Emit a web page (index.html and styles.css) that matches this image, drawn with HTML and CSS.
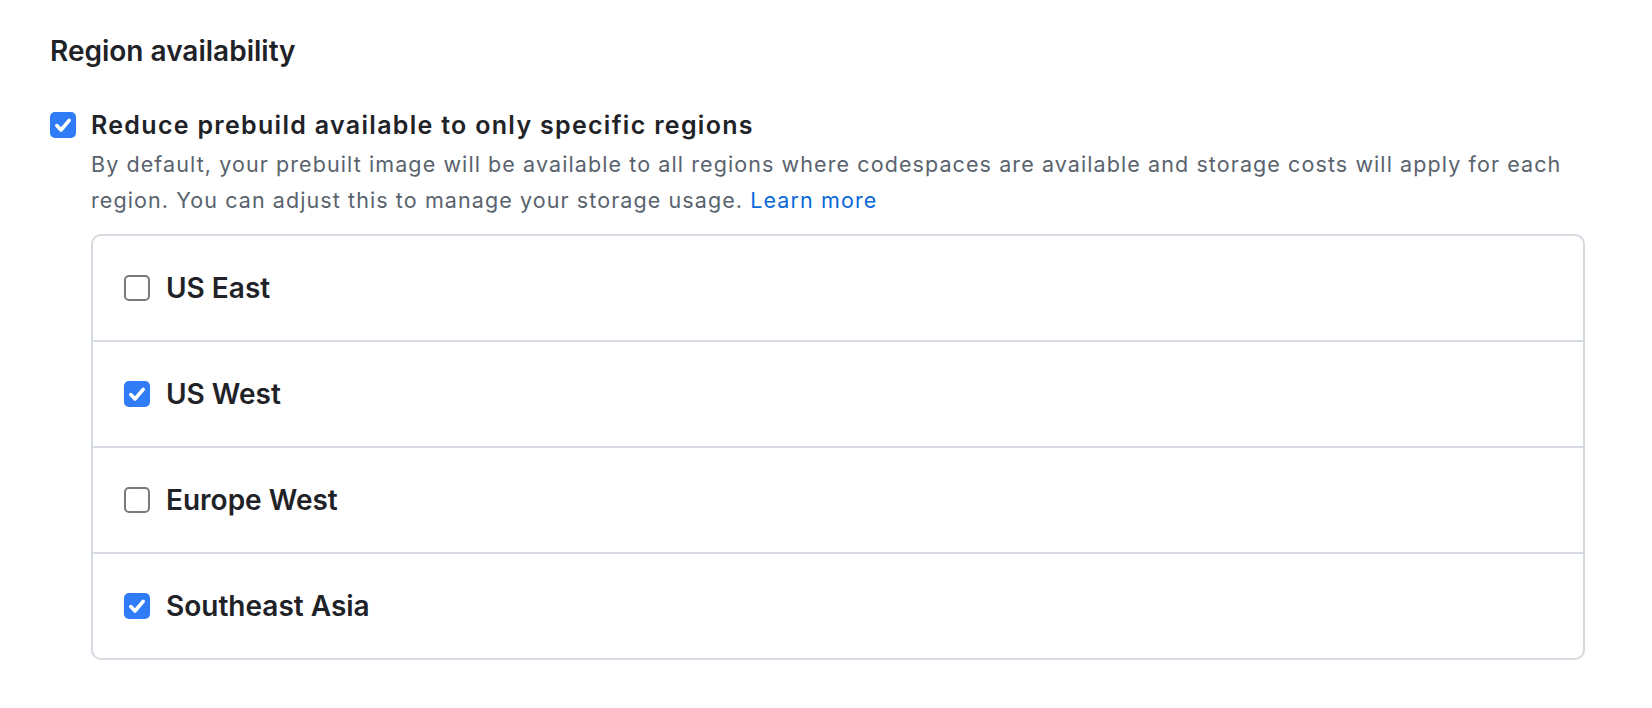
FILE: index.html
```html
<!DOCTYPE html>
<html lang="en">
<head>
<meta charset="utf-8">
<title>Region availability</title>
<link rel="stylesheet" href="styles.css">
</head>
<body>
<main class="page">
  <h2 class="heading">Region availability</h2>
  <div class="control">
    <span class="check checked"><svg viewBox="0 0 26 26" width="26" height="26"><path d="M6.8 13.6l4.2 4.4 8.2-9.6" fill="none" stroke="#fff" stroke-width="3.6" stroke-linecap="round" stroke-linejoin="round"/></svg></span>
    <div class="control-body">
      <div class="control-label">Reduce prebuild available to only specific regions</div>
      <p class="caption">By default, your prebuilt image will be available to all regions where codespaces are available and storage costs will apply for each region. You can adjust this to manage your storage usage. <a class="link" href="#">Learn more</a></p>
      <ul class="regions">
        <li class="region">
          <span class="check"></span>
          <span class="region-name">US East</span>
        </li>
        <li class="region">
          <span class="check checked"><svg viewBox="0 0 26 26" width="26" height="26"><path d="M6.8 13.6l4.2 4.4 8.2-9.6" fill="none" stroke="#fff" stroke-width="3.6" stroke-linecap="round" stroke-linejoin="round"/></svg></span>
          <span class="region-name">US West</span>
        </li>
        <li class="region">
          <span class="check"></span>
          <span class="region-name">Europe West</span>
        </li>
        <li class="region">
          <span class="check checked"><svg viewBox="0 0 26 26" width="26" height="26"><path d="M6.8 13.6l4.2 4.4 8.2-9.6" fill="none" stroke="#fff" stroke-width="3.6" stroke-linecap="round" stroke-linejoin="round"/></svg></span>
          <span class="region-name">Southeast Asia</span>
        </li>
      </ul>
    </div>
  </div>
</main>
</body>
</html>
```
FILE: styles.css
```css
* { box-sizing: border-box; }
html, body { margin: 0; padding: 0; background: #ffffff; }
body {
  font-family: Inter, "Noto Sans", "Liberation Sans", sans-serif;
  color: #1f2328;
}
.page {
  padding: 30px 67px 0 50px;
}
.heading {
  margin: 0;
  font-size: 28px;
  line-height: 42px;
  font-weight: 600;
}
.control {
  display: flex;
  gap: 15px;
  margin-top: 36px;
}
.check {
  flex: 0 0 auto;
  width: 26px;
  height: 26px;
  border: 2px solid #777b80;
  border-radius: 5px;
  background: #fff;
  display: block;
  position: relative;
}
.check.checked {
  border: none;
  background: #2f7cf6;
}
.check svg { display: block; }
.control > .check { margin-top: 3.5px; }
.control-body { flex: 1 1 auto; min-width: 0; }
.control-label {
  font-size: 25px;
  line-height: 35px;
  font-weight: 600;
  letter-spacing: 1.3px;
}
.caption {
  margin: 4px 0 0 0;
  font-size: 21.5px;
  line-height: 35.5px;
  color: #59636e;
  letter-spacing: 1.09px;
}
.link { color: #0969da; text-decoration: none; }
.regions {
  list-style: none;
  margin: 16px 0 0 0;
  padding: 0;
  border: 2px solid #d5dae0;
  border-radius: 10px;
}
.region {
  display: flex;
  align-items: center;
  gap: 16px;
  height: 104px;
  padding: 0 31px;
}
.region + .region { border-top: 2px solid #d5dae0; height: 106px; }
.region-name {
  font-size: 28px;
  line-height: 40px;
  font-weight: 600;
}
```
